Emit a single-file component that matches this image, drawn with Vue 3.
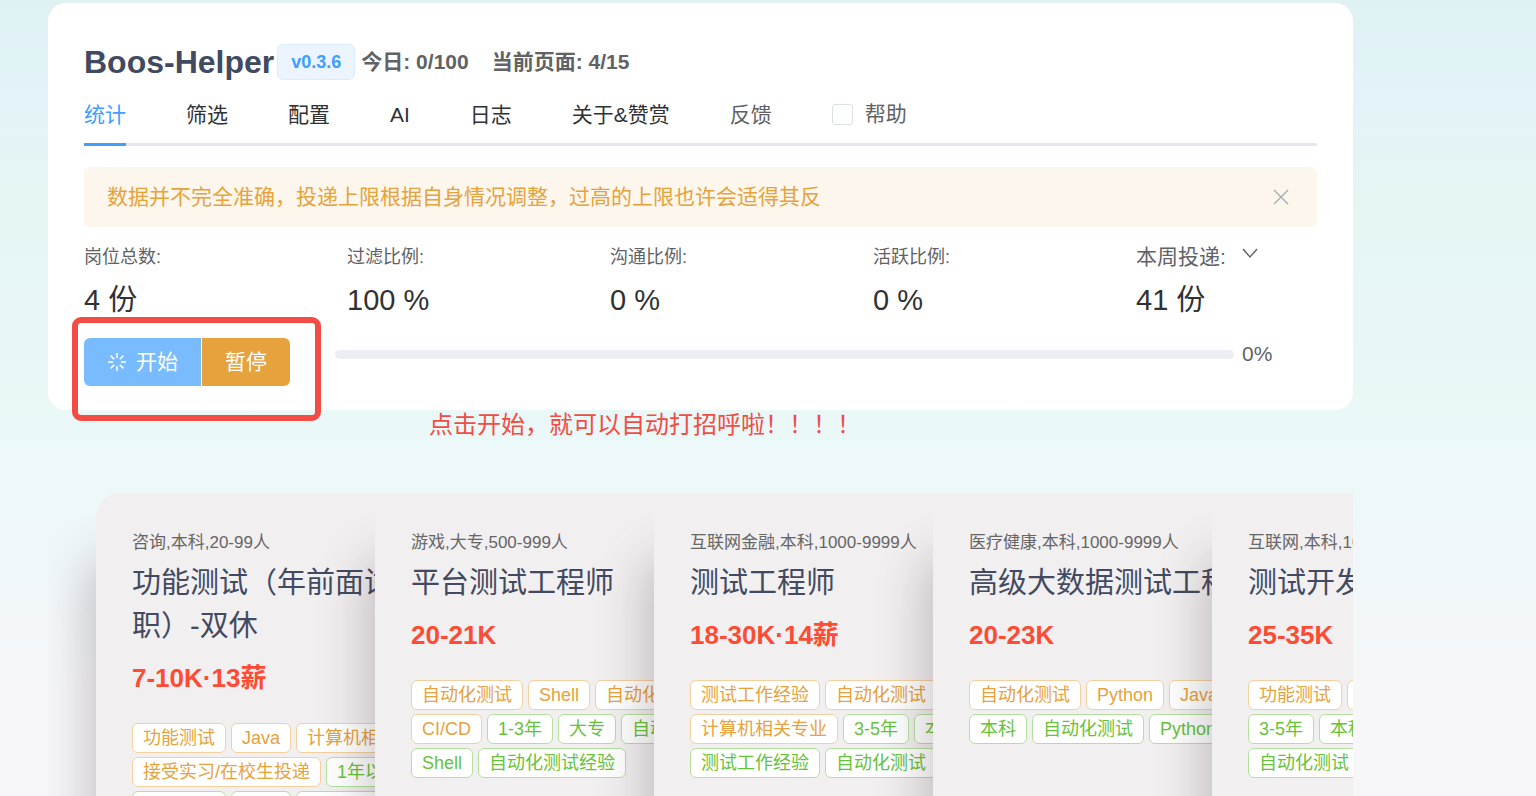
<template>
  <div class="page">
    <!-- 助手面板 -->
    <section class="panel">
      <header class="panel-head">
        <h2>Boos-Helper</h2>
        <span class="version">v0.3.6</span>
        <strong class="info">今日: 0/100</strong>
        <strong class="info">当前页面: 4/15</strong>
      </header>

      <nav class="tabs">
        <button
          v-for="item in tabs"
          :key="item"
          type="button"
          class="tab"
          :class="{ active: activeTab === item }"
          @click="activeTab = item"
        >
          {{ item }}
        </button>
        <a class="tab tab-link" href="#feedback">反馈</a>
        <label class="tab tab-link help">
          <input v-model="help" type="checkbox" />
          <span>帮助</span>
        </label>
      </nav>

      <div v-if="showAlert" class="alert">
        <span>数据并不完全准确，投递上限根据自身情况调整，过高的上限也许会适得其反</span>
        <button type="button" aria-label="关闭" @click="showAlert = false">
          <svg viewBox="0 0 18 18" width="18" height="18">
            <path d="M2 2L16 16M16 2L2 16" />
          </svg>
        </button>
      </div>

      <div class="stats">
        <div v-for="item in stats" :key="item.label" class="stat">
          <div class="stat-label">{{ item.label }}:</div>
          <div class="stat-value">{{ item.value }} {{ item.unit }}</div>
        </div>
        <div class="stat">
          <button type="button" class="stat-label stat-drop">
            <span>本周投递:</span>
            <svg viewBox="0 0 18 18" width="18" height="18">
              <path d="M2 4L9 12L16 4" />
            </svg>
          </button>
          <div class="stat-value">41 份</div>
        </div>
      </div>

      <div class="actions">
        <div class="btn-group">
          <button type="button" class="btn start">
            <svg viewBox="0 0 20 20" width="20" height="20">
              <path
                d="M10 1V6M10 14V19M1 10H6M14 10H19M3.6 3.6L7.2 7.2M12.8 12.8L16.4 16.4M3.6 16.4L7.2 12.8M12.8 7.2L16.4 3.6"
              />
            </svg>
            <span>开始</span>
          </button>
          <button type="button" class="btn pause">暂停</button>
        </div>
        <div class="progress">
          <div class="progress-bar">
            <div class="progress-inner" :style="{ width: percent + '%' }"></div>
          </div>
          <span class="progress-text">{{ percent }}%</span>
        </div>
        <!-- 红框标注 -->
        <div class="mark-box"></div>
      </div>
      <p class="mark-text">点击开始，就可以自动打招呼啦！！！！</p>
    </section>

    <!-- 岗位卡片 -->
    <ul class="jobs">
      <li v-for="(job, index) in jobs" :key="index" class="job">
        <div class="job-desc">{{ job.desc }}</div>
        <h3>{{ job.title }}</h3>
        <div class="salary">{{ job.salary }}</div>
        <div class="tags">
          <span v-for="tag in job.skills" :key="tag" class="tag warning">{{ tag }}</span>
          <span v-for="tag in job.labels" :key="tag" class="tag success">{{ tag }}</span>
        </div>
      </li>
    </ul>
  </div>
</template>

<script setup>
import { ref } from "vue";

const tabs = ["统计", "筛选", "配置", "AI", "日志", "关于&赞赏"];
const activeTab = ref("统计");
const help = ref(false);
const showAlert = ref(true);
const percent = ref(0);

const stats = ref([
  { label: "岗位总数", value: 4, unit: "份" },
  { label: "过滤比例", value: 100, unit: "%" },
  { label: "沟通比例", value: 0, unit: "%" },
  { label: "活跃比例", value: 0, unit: "%" },
]);

const jobs = ref([
  {
    desc: "咨询,本科,20-99人",
    title: "功能测试（年前面试年后入职）-双休",
    salary: "7-10K·13薪",
    skills: ["功能测试", "Java", "计算机相关专业", "接受实习/在校生投递"],
    labels: ["1年以内", "功能测试", "Java", "计算机相关专业"],
  },
  {
    desc: "游戏,大专,500-999人",
    title: "平台测试工程师",
    salary: "20-21K",
    skills: ["自动化测试", "Shell", "自动化测试经验", "CI/CD"],
    labels: ["1-3年", "大专", "自动化测试", "Shell", "自动化测试经验"],
  },
  {
    desc: "互联网金融,本科,1000-9999人",
    title: "测试工程师",
    salary: "18-30K·14薪",
    skills: ["测试工作经验", "自动化测试", "计算机相关专业"],
    labels: ["3-5年", "本科", "测试工作经验", "自动化测试"],
  },
  {
    desc: "医疗健康,本科,1000-9999人",
    title: "高级大数据测试工程师",
    salary: "20-23K",
    skills: ["自动化测试", "Python", "JavaScript"],
    labels: ["本科", "自动化测试", "Python"],
  },
  {
    desc: "互联网,本科,1000-9999人",
    title: "测试开发工程师",
    salary: "25-35K",
    skills: ["功能测试", "自动化测试", "性能测试"],
    labels: ["3-5年", "本科", "测试工作经验", "自动化测试"],
  },
]);
</script>

<style>
body {
  margin: 0;
}
</style>

<style scoped>
.page {
  display: flex;
  flex-direction: column;
  box-sizing: border-box;
  height: 100vh;
  padding: 3px 183px 0 48px;
  overflow: hidden;
  font-family: "Liberation Sans", "Noto Sans CJK SC", sans-serif;
  font-size: 21px;
  line-height: 30px;
  color: #606266;
  background: linear-gradient(
    #e0f1f4,
    #e3f3f7 15%,
    #e5f5f4 24%,
    #e8f6f7 44%,
    #ebf8f8 54%,
    #eff7fb 66%,
    #f1f7fb 74%,
    #f7f7f9 86%
  );
}
button {
  padding: 0;
  font: inherit;
  color: inherit;
  background: none;
  border: none;
  cursor: pointer;
}
svg {
  fill: none;
  stroke: currentColor;
}
.panel {
  position: relative;
  flex: none;
  padding: 36px 36px 24px;
  background: #fff;
  border-radius: 18px;
}
.panel-head {
  display: flex;
  align-items: center;
  height: 46px;
}
h2 {
  margin: 0;
  font-size: 32px;
  line-height: 46px;
  color: #414a60;
}
.version {
  box-sizing: border-box;
  height: 36px;
  margin: 0 6px 0 3px;
  padding: 0 13px;
  font-size: 18px;
  font-weight: bold;
  line-height: 34px;
  color: #409eff;
  background: #ecf5ff;
  border: 1px solid #d9ecff;
  border-radius: 6px;
}
.info + .info {
  margin-left: 23px;
}

.tabs {
  display: flex;
  gap: 60px;
  height: 58px;
  border-bottom: 3px solid #e4e7ed;
}
/* 选中下划线压在导航底边上 */
.tab {
  box-sizing: content-box;
  height: 58px;
  line-height: 60px;
  color: #303133;
  border-bottom: 3px solid transparent;
}
.tab.active {
  color: #409eff;
  border-bottom-color: #409eff;
}
.tab-link {
  color: #606266;
  text-decoration: none;
}
.help {
  display: flex;
  align-items: center;
  gap: 12px;
}
.help input {
  width: 21px;
  height: 21px;
  margin: 0;
  appearance: none;
  background: #fff;
  border: 1px solid #dcdfe6;
  border-radius: 3px;
}
.help input:checked {
  background: #409eff;
}

.alert {
  display: flex;
  align-items: center;
  justify-content: space-between;
  height: 60px;
  margin-top: 21px;
  padding: 0 27px 0 23px;
  color: #e6a23c;
  background: #fdf6ec;
  border-radius: 6px;
}
.alert button {
  display: flex;
  color: #a8abb2;
}
.alert svg,
.stat-drop svg {
  stroke-width: 1.4;
}

.stats {
  display: grid;
  grid-template-columns: repeat(5, 1fr);
  gap: 82px;
  margin-top: 14px;
}
.stat {
  white-space: nowrap;
}
.stat-label {
  height: 32px;
  font-size: 18px;
  line-height: 32px;
}
.stat-drop {
  display: flex;
  gap: 15px;
  font-size: 21px;
}
.stat-drop svg {
  margin-top: 4px;
}
.stat-value {
  height: 54px;
  font-size: 29px;
  line-height: 54px;
  color: #303133;
}

.actions {
  position: relative;
  display: flex;
  align-items: center;
  margin-top: 11px;
}
.btn-group {
  display: flex;
  gap: 1px;
}
.btn {
  display: flex;
  align-items: center;
  justify-content: center;
  gap: 9px;
  height: 48px;
  padding: 0 23px;
  color: #fff;
}
.btn svg {
  stroke-width: 1.5;
}
.start {
  background: #79bbff;
  border-radius: 6px 0 0 6px;
}
.pause {
  background: #e6a23c;
  border-radius: 0 6px 6px 0;
}
.progress {
  display: flex;
  flex: 1;
  align-items: center;
  gap: 8px;
  margin: 0 0 16px 45px;
}
.progress-bar {
  flex: 1;
  height: 9px;
  overflow: hidden;
  background: #ebeef5;
  border-radius: 5px;
}
.progress-inner {
  height: 100%;
  background: #409eff;
}
.progress-text {
  width: 75px;
}
.mark-box {
  position: absolute;
  top: -21px;
  left: -12px;
  box-sizing: border-box;
  width: 249px;
  height: 104px;
  border: 6px solid #f24c45;
  border-radius: 9px;
  pointer-events: none;
}
.mark-text {
  position: absolute;
  bottom: -33px;
  left: 381px;
  margin: 0;
  font-size: 24px;
  line-height: 36px;
  color: #f24c45;
}

.jobs {
  display: flex;
  flex: 1;
  align-items: flex-start;
  min-height: 0;
  margin: 0;
  padding: 83px 0 0 48px;
  overflow: hidden;
  list-style: none;
}
.job {
  box-sizing: border-box;
  flex: none;
  width: 420px;
  height: 570px;
  padding: 37px 36px 36px;
  background: #f2eff0;
  border-radius: 24px;
  box-shadow: -8px 64px 48px rgba(50, 35, 40, 0.25);
}
.job + .job {
  margin-left: -141px;
}
.job-desc {
  font-size: 17px;
  line-height: 26px;
  color: #666;
}
h3 {
  margin: 6px 0 11px;
  font-size: 29px;
  font-weight: normal;
  line-height: 43px;
  color: #414a60;
}
.salary {
  font-size: 26px;
  font-weight: bold;
  line-height: 38px;
  color: #fe4c34;
}
.tags {
  display: flex;
  flex-wrap: wrap;
  gap: 4px 5px;
  margin-top: 26px;
}
.tag {
  box-sizing: border-box;
  height: 30px;
  padding: 0 10px;
  font-size: 18px;
  line-height: 28px;
  background: #fff;
  border: 1px solid;
  border-radius: 6px;
}
.warning {
  color: #e6a23c;
  border-color: #f3d19e;
}
.success {
  color: #67c23a;
  border-color: #b3e19d;
}
</style>
